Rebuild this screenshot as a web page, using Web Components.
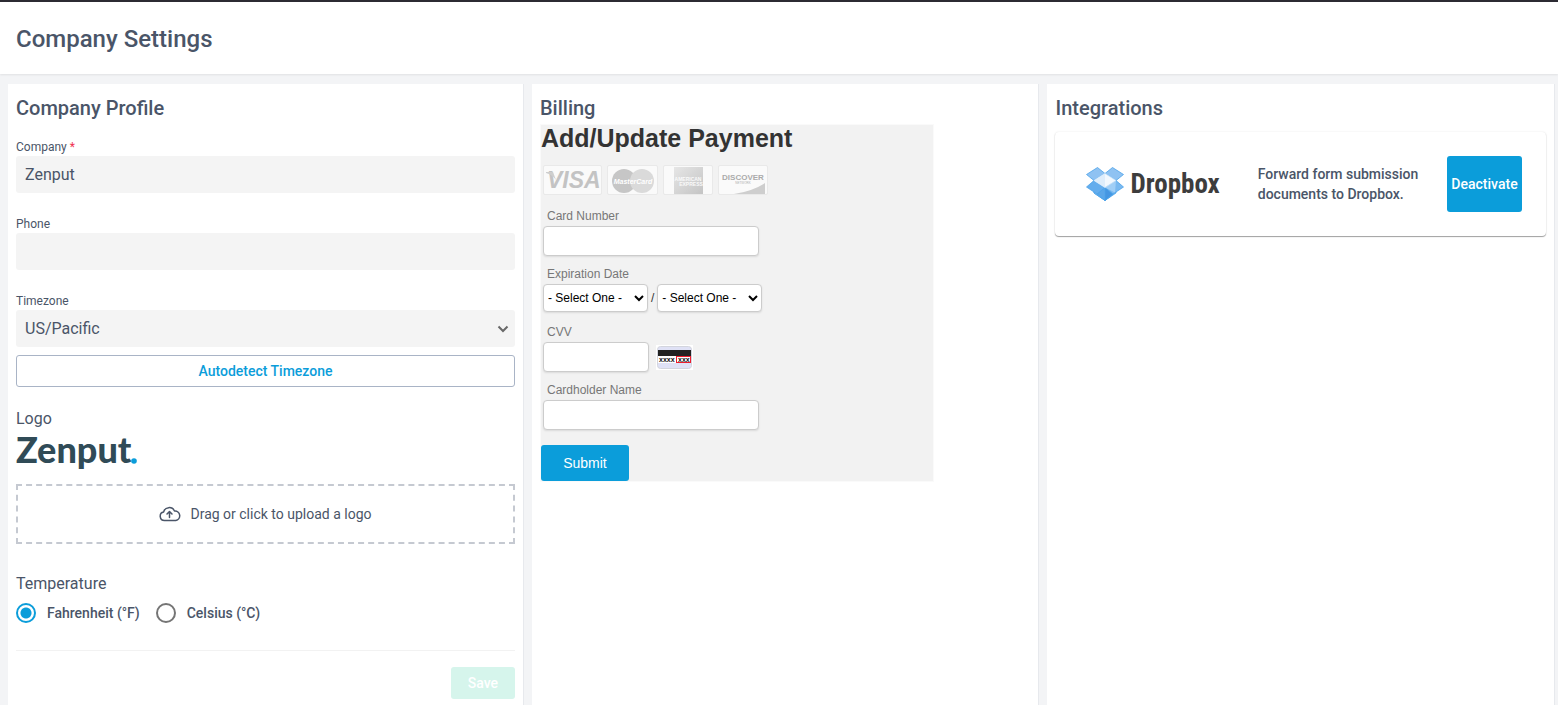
<!DOCTYPE html>
<html lang="en">
<head>
<meta charset="utf-8">
<meta name="viewport" content="width=device-width, initial-scale=1">
<title>Company Settings</title>
<style>
  body {
    margin: 0;
    background: #f3f4f6;
    color: #4a5568;
    font-family: Roboto, "Liberation Sans", sans-serif;
    font-size: 16px;
    line-height: 24px;
    --blue: #0b9dda;
    --field: #f4f4f4;
  }
</style>
</head>
<body>
<settings-page>
  <page-header slot="header">Company Settings</page-header>

  <settings-column heading="Company Profile">
    <company-profile></company-profile>
  </settings-column>

  <settings-column heading="Billing">
    <payment-form></payment-form>
  </settings-column>

  <settings-column heading="Integrations">
    <integration-card action="Deactivate">
      <dropbox-logo slot="logo"></dropbox-logo>
      Forward form submission documents to Dropbox.
    </integration-card>
  </settings-column>
</settings-page>

<script>
// Base class: clones its markup into an open shadow root
class BaseElement extends HTMLElement {
  constructor() {
    super();
    const template = document.createElement('template');
    template.innerHTML = this.render();
    this.attachShadow({ mode: 'open' });
    this.shadowRoot.appendChild(template.content.cloneNode(true));
  }
}

// Page shell: header on top, three columns below
class SettingsPage extends BaseElement {
  render() {
    return `
      <style>
        :host {
          display: flex;
          flex-direction: column;
          min-height: 100vh;
        }

        main {
          flex: 1;
          display: grid;
          grid-template-columns: 61fr 60fr 60fr;
          gap: 8px;
          padding: 10px 3px 0 8px;
        }
      </style>
      <slot name="header"></slot>
      <main><slot></slot></main>
    `;
  }
}

class PageHeader extends BaseElement {
  render() {
    return `
      <style>
        :host {
          display: block;
          padding: 21px 16px 19px;
          border-top: 2px solid #2c2b33;
          background: #fff;
          box-shadow: 0 1px 2px rgba(0, 0, 0, 0.08);
        }

        h1 {
          margin: 0;
          font-size: 24px;
          line-height: 32px;
          font-weight: 500;
        }
      </style>
      <h1><slot></slot></h1>
    `;
  }
}

class SettingsColumn extends BaseElement {
  render() {
    return `
      <style>
        :host {
          display: block;
          min-width: 0;
          padding: 12px 8px 4px;
          border-right: 1px solid #e7e9ed;
          background: #fff;
        }

        h2 {
          margin: 0;
          font-size: 20px;
          line-height: 24px;
          font-weight: 500;
        }
      </style>
      <h2></h2>
      <slot></slot>
    `;
  }

  connectedCallback() {
    this.shadowRoot.querySelector('h2').textContent = this.getAttribute('heading');
  }
}

// Labelled text box: label, value, required
class TextField extends BaseElement {
  render() {
    return `
      <style>
        :host {
          display: block;
        }

        label {
          display: block;
          font-size: 12px;
          line-height: 18px;
        }

        .required {
          color: #f0324f;
        }

        input {
          display: block;
          box-sizing: border-box;
          width: 100%;
          height: 37px;
          padding: 0 9px;
          border: 0;
          border-radius: 3px;
          background: var(--field);
          color: inherit;
          font: inherit;
        }
      </style>
      <label for="field"><span class="text"></span> <span class="required"></span></label>
      <input id="field" type="text">
    `;
  }

  connectedCallback() {
    this.shadowRoot.querySelector('.text').textContent = this.getAttribute('label');
    this.shadowRoot.querySelector('.required').textContent = this.hasAttribute('required') ? '*' : '';
    this.shadowRoot.querySelector('input').value = this.getAttribute('value') || '';
  }
}

class TimezoneField extends BaseElement {
  render() {
    return `
      <style>
        :host {
          display: block;
        }

        label {
          display: block;
          font-size: 12px;
          line-height: 18px;
        }

        .box {
          display: grid;
          align-items: center;
        }

        select, svg {
          grid-area: 1 / 1;
        }

        select {
          appearance: none;
          width: 100%;
          height: 37px;
          padding: 0 9px;
          border: 0;
          border-radius: 3px;
          background: var(--field);
          color: inherit;
          font: inherit;
        }

        svg {
          justify-self: end;
          margin-right: 6px;
          pointer-events: none;
        }

        button {
          display: block;
          width: 100%;
          height: 32px;
          margin-top: 8px;
          border: 1px solid #a9b4c6;
          border-radius: 3px;
          background: #fff;
          color: var(--blue);
          font: 500 14px Roboto, sans-serif;
        }
      </style>
      <label for="zone">Timezone</label>
      <div class="box">
        <select id="zone">
          <option>US/Pacific</option>
        </select>
        <svg width="12" height="8" viewBox="0 0 12 8" fill="none" stroke="#686868" stroke-width="2">
          <path d="M1.5 1.5 6 6l4.500-4.500"/>
        </svg>
      </div>
      <button type="button">Autodetect Timezone</button>
    `;
  }
}

class ZenputLogo extends BaseElement {
  render() {
    return `
      <style>
        :host {
          display: flex;
          align-items: flex-start;
          height: 36px;
          color: #304b57;
          font: 900 36px/28px Lato, sans-serif;
        }

        svg {
          margin-top: 23px;
        }
      </style>
      <span>Zenput</span>
      <svg width="6" height="6" viewBox="0 0 6 6"><circle cx="3" cy="3" r="2.800" fill="#0b9dda"/></svg>
    `;
  }
}

class UploadZone extends BaseElement {
  render() {
    return `
      <style>
        :host {
          display: block;
        }

        button {
          display: flex;
          align-items: center;
          justify-content: center;
          gap: 9px;
          width: 100%;
          height: 60px;
          border: 2px dashed #c5c9d1;
          background: #fff;
          color: inherit;
          font: 14px Roboto, sans-serif;
        }
      </style>
      <button type="button">
        <svg width="22" height="16" viewBox="0 0 22 16" fill="none" stroke="currentColor" stroke-width="1.500" stroke-linecap="round" stroke-linejoin="round">
          <path d="M5.500 14.500a4.300 4.300 0 0 1-.9-8.500A5.800 5.800 0 0 1 15.500 5a4.800 4.800 0 0 1 1.300 9.500z"/>
          <path d="M10.500 11.500V6M8 8l2.500-2.500L13 8"/>
        </svg>
        <slot></slot>
      </button>
    `;
  }
}

class CompanyProfile extends BaseElement {
  render() {
    return `
      <style>
        :host {
          display: block;
          padding-top: 18px;
        }

        text-field {
          margin-bottom: 22px;
        }

        h3 {
          margin: 0;
          font-size: 16px;
          line-height: 24px;
          font-weight: 400;
        }

        .logo {
          margin: 20px 0 28px;
        }

        zenput-logo {
          margin: 4px 0 13px;
        }

        fieldset {
          margin: 0;
          padding: 0;
          border: 0;
        }

        legend {
          padding: 0;
        }

        .options {
          display: flex;
          gap: 16px;
          margin-top: 7px;
        }

        .options label {
          display: flex;
          align-items: center;
          gap: 11px;
          font-size: 14px;
          line-height: 20px;
          font-weight: 500;
        }

        .options input {
          appearance: none;
          box-sizing: border-box;
          width: 20px;
          height: 20px;
          margin: 0;
          border: 2px solid #757575;
          border-radius: 50%;
        }

        .options input:checked {
          border-color: var(--blue);
          background: radial-gradient(circle, var(--blue) 5px, #fff 6px);
        }

        .actions {
          display: flex;
          justify-content: flex-end;
          margin-top: 27px;
          padding-top: 16px;
          border-top: 1px solid #f2f2f2;
        }

        .actions button {
          min-width: 64px;
          height: 32px;
          padding: 0 15px;
          border: 0;
          border-radius: 3px;
          background: #d6f5ec;
          color: #fff;
          font: 500 14px Roboto, sans-serif;
        }
      </style>
      <text-field label="Company" value="Zenput" required></text-field>
      <text-field label="Phone"></text-field>
      <timezone-field></timezone-field>
      <div class="logo">
        <h3>Logo</h3>
        <zenput-logo></zenput-logo>
        <upload-zone>Drag or click to upload a logo</upload-zone>
      </div>
      <fieldset>
        <legend>Temperature</legend>
        <div class="options">
          <label><input type="radio" name="unit" value="f" checked>Fahrenheit (°F)</label>
          <label><input type="radio" name="unit" value="c">Celsius (°C)</label>
        </div>
      </fieldset>
      <div class="actions"><button type="button" disabled>Save</button></div>
    `;
  }
}

class CardBrands extends BaseElement {
  render() {
    return `
      <style>
        :host {
          display: flex;
          gap: 5px;
        }

        svg {
          box-sizing: border-box;
          height: 30px;
          border: 1px solid #e9e9e9;
          border-radius: 2px;
          background: #fafafa;
          font-family: "Liberation Sans", sans-serif;
        }
      </style>
      <svg width="59" viewBox="0 0 57 28">
        <text x="3" y="22" font-size="23" font-weight="700" font-style="italic" fill="#c3c3c3">VISA</text>
        <path d="M2 6h7l3 8C9 10 6 8 2 7z" fill="#cecece"/>
      </svg>
      <svg width="51" viewBox="0 0 49 28">
        <circle cx="16" cy="15" r="12" fill="#c6c6c6"/>
        <circle cx="34" cy="15" r="12" fill="#dadada"/>
        <text x="25" y="18" font-size="7" font-weight="700" font-style="italic" text-anchor="middle" fill="#fff">MasterCard</text>
      </svg>
      <svg width="50" viewBox="0 0 48 28">
        <defs>
          <linearGradient id="amex" x1="0" y1="0" x2="1" y2="1">
            <stop offset="0" stop-color="#e6e6e6"/>
            <stop offset="1" stop-color="#c4c4c4"/>
          </linearGradient>
        </defs>
        <path d="M10 1h29v27H10z" fill="url(#amex)"/>
        <text x="24" y="15" font-size="5" font-weight="700" text-anchor="middle" fill="#fafafa">AMERICAN</text>
        <text x="27" y="20" font-size="5" font-weight="700" text-anchor="middle" fill="#fafafa">EXPRESS</text>
      </svg>
      <svg width="50" viewBox="0 0 48 28">
        <path d="M46 17v11H15q19-3 31-11z" fill="#cecece"/>
        <text x="24" y="14" font-size="8" font-weight="700" text-anchor="middle" fill="#ababab">DISCOVER</text>
        <text x="24" y="18" font-size="3" text-anchor="middle" fill="#b0b0b0">NETWORK</text>
      </svg>
    `;
  }
}

class PaymentForm extends BaseElement {
  render() {
    return `
      <style>
        :host {
          display: block;
          width: 80%;
          margin-top: 4px;
          border: 1px solid #fafafa;
          background: #f2f2f2;
          background-clip: padding-box;
          color: #333;
          font-family: "Liberation Sans", sans-serif;
          font-size: 12px;
        }

        h3 {
          margin: 0 0 14px;
          font-size: 25px;
          line-height: 26px;
          font-weight: 700;
        }

        .fields {
          padding: 0 2px;
        }

        card-brands {
          margin-bottom: 11px;
        }

        label {
          display: block;
          padding-left: 4px;
          color: #777;
          line-height: 20px;
        }

        .row {
          display: flex;
          align-items: center;
          gap: 3px;
          height: 30px;
          margin-bottom: 8px;
        }

        .row.cvv {
          gap: 7px;
        }

        .row.expiry {
          height: 28px;
          margin-bottom: 10px;
        }

        input, select {
          box-sizing: border-box;
          border: 1px solid #ccc;
          border-radius: 4px;
          background: #fff;
          color: #000;
          font: 12px "Liberation Sans", sans-serif;
          box-shadow: 0 1px 2px rgba(0, 0, 0, 0.1);
        }

        input {
          width: 216px;
          height: 30px;
          padding: 0 6px;
        }

        .cvv input {
          width: 106px;
        }

        select {
          width: 105px;
          height: 28px;
        }

        button {
          display: block;
          width: 88px;
          height: 36px;
          margin-top: 15px;
          border: 0;
          border-radius: 3px;
          background: var(--blue);
          color: #fff;
          font: 14px "Liberation Sans", sans-serif;
        }
      </style>
      <h3>Add/Update Payment</h3>
      <div class="fields">
        <card-brands></card-brands>
        <label for="number">Card Number</label>
        <div class="row"><input id="number" type="text"></div>
        <label for="month">Expiration Date</label>
        <div class="row expiry">
          <select id="month"><option>- Select One -</option></select>
          <span>/</span>
          <select id="year" aria-label="Expiration year"><option>- Select One -</option></select>
        </div>
        <label for="cvv">CVV</label>
        <div class="row cvv">
          <input id="cvv" type="text">
          <svg width="37" height="25" viewBox="0 0 37 25" font-family="Liberation Sans, sans-serif" font-weight="700">
            <path d="M0 0h37v25H0z" fill="#fff"/>
            <rect x="1.500" y="1.500" width="34" height="22" rx="3" fill="#dfe1f5" stroke="#d3d5dd"/>
            <path d="M2 5h33v6H2z" fill="#222"/>
            <path d="M2 11h33v7H2z" fill="#fff"/>
            <text x="3" y="17" font-size="7" fill="#111">xxxx</text>
            <rect x="20.500" y="11.500" width="14" height="6" fill="#fff" stroke="#ed1c2e"/>
            <text x="22" y="17" font-size="7" fill="#111">xxx</text>
          </svg>
        </div>
        <label for="holder">Cardholder Name</label>
        <input id="holder" type="text">
      </div>
      <button type="button">Submit</button>
    `;
  }
}

class DropboxLogo extends BaseElement {
  render() {
    return `
      <style>
        :host {
          display: flex;
          align-items: center;
          gap: 6px;
          color: #3d3d3d;
          font: 700 27px/34px "Liberation Sans Narrow", "Roboto Condensed", "Open Sans Condensed", "Liberation Sans", sans-serif;
        }
      </style>
      <svg width="38" height="34" viewBox="0 0 38 34" stroke="#4ba3ea" stroke-width=".8" stroke-linejoin="round">
        <path d="M8 19v7l11 7.500L30 26v-7l-11-6z" fill="#74b6ef"/>
        <path d="M19 20.500V33.500L8 26v-5z" fill="#8cc4f3"/>
        <path d="M19 20.500 11 27l8 6.500L27 27z" fill="#5aa6e9"/>
        <path d="M19 20.500V33.500L27 27z" fill="#4596e2"/>
        <path d="M.5 7.500 11.500.5 19 6.500 8 13.500z" fill="#8fc2f2"/>
        <path d="M37.500 7.500 26.500.5 19 6.500l11 7z" fill="#8fc2f2"/>
        <path d="M8 13.500.5 20 11 27l8-6.500z" fill="#64aded"/>
        <path d="M30 13.500l7.500 6.500L27 27l-8-6.500z" fill="#7ab9f0"/>
        <path d="M30 13.500l-1 12L19 20.500z" fill="#a0cef6" stroke="none"/>
        <path d="M8 13.500l11-7 11 7-11 7z" fill="#f2f8fe" stroke="#c9e2f9"/>
        <path d="M8 13.500l11-7v14z" fill="#deedfb" stroke="none"/>
      </svg>
      <span>Dropbox</span>
    `;
  }
}

class IntegrationCard extends BaseElement {
  render() {
    return `
      <style>
        :host {
          display: flex;
          align-items: center;
          gap: 24px;
          margin-top: 12px;
          padding: 24px;
          border-radius: 4px;
          background: #fff;
          box-shadow: 0 1px 1px rgba(0, 0, 0, 0.36), 0 0 2px rgba(0, 0, 0, 0.1);
          font-size: 14px;
          line-height: 20px;
          font-weight: 500;
        }

        ::slotted([slot="logo"]) {
          margin: 0 14px 0 7px;
        }

        p {
          flex: 1;
          margin: 0;
        }

        button {
          width: 75px;
          height: 56px;
          padding: 0;
          border: 0;
          border-radius: 3px;
          background: var(--blue);
          color: #fff;
          font: 500 14px Roboto, sans-serif;
        }
      </style>
      <slot name="logo"></slot>
      <p><slot></slot></p>
      <button type="button"></button>
    `;
  }

  connectedCallback() {
    this.shadowRoot.querySelector('button').textContent = this.getAttribute('action');
  }
}

customElements.define('settings-page', SettingsPage);
customElements.define('page-header', PageHeader);
customElements.define('settings-column', SettingsColumn);
customElements.define('text-field', TextField);
customElements.define('timezone-field', TimezoneField);
customElements.define('zenput-logo', ZenputLogo);
customElements.define('upload-zone', UploadZone);
customElements.define('company-profile', CompanyProfile);
customElements.define('card-brands', CardBrands);
customElements.define('payment-form', PaymentForm);
customElements.define('dropbox-logo', DropboxLogo);
customElements.define('integration-card', IntegrationCard);
</script>
</body>
</html>
